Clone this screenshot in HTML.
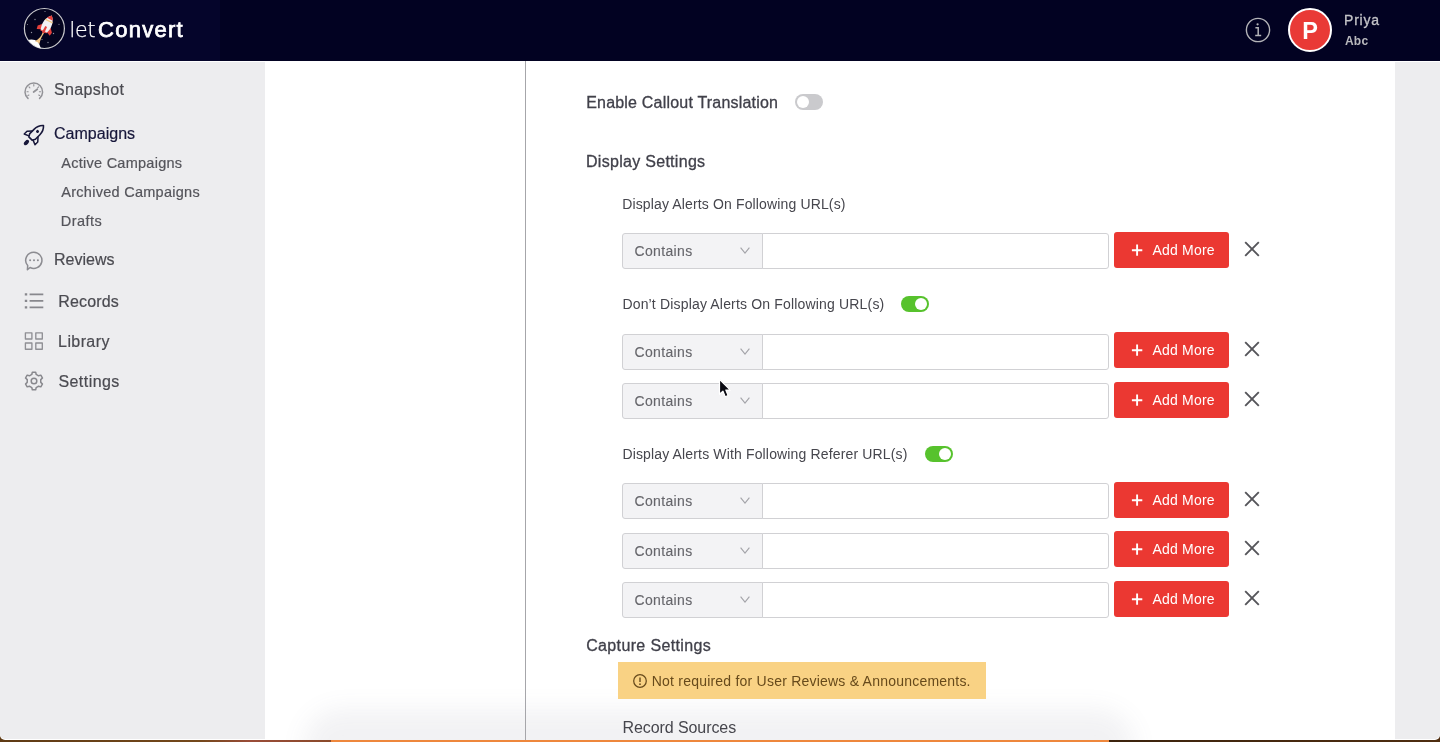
<!DOCTYPE html>
<html lang="en">
<head>
<meta charset="utf-8">
<title>letConvert - Campaign Settings</title>
<style>
*{box-sizing:border-box;margin:0;padding:0}
html,body{width:1440px;height:742px;overflow:hidden;background:#fff}
body{position:relative;will-change:transform;font-family:"Liberation Sans",Arial,sans-serif;color:#3f3f46;-webkit-font-smoothing:antialiased}
.abs,.t{position:absolute}
.t{white-space:nowrap;line-height:20px;font-size:16px}
svg{display:block;overflow:visible}

/* ---------- top bar ---------- */
.topbar{position:absolute;left:0;top:0;width:1440px;height:61px;background:#020222}
.topbar .logo-bg{position:absolute;left:0;top:0;width:220px;height:61px;background:#05052b}
.brand{left:69.500px;top:15px;font-size:22px;line-height:30px;color:#fff}
.brand i{font-style:normal;font-family:"DejaVu Sans","Liberation Sans",sans-serif;font-weight:200;font-size:20.500px;letter-spacing:-.2px;-webkit-text-stroke:.25px #fff}
.brand b{font-weight:400;letter-spacing:1.250px;margin-left:2.800px;-webkit-text-stroke:.75px #fff}
.user-name{left:1344px;top:10px;font-size:14px;color:#c4c4c8;letter-spacing:.8px;-webkit-text-stroke:.3px #c4c4c8}
.user-org{left:1345px;top:31px;font-size:12px;font-weight:700;color:#b9b9bd;letter-spacing:.2px}
.avatar{position:absolute;left:1288px;top:8px;width:44px;height:44px;border-radius:50%;background:#e93a36;border:2px solid #fff;color:#fff;font-weight:700;font-size:23.500px;line-height:42px;text-align:center}

/* ---------- sidebar ---------- */
.sidebar{position:absolute;left:0;top:62px;width:265px;height:677px;border-radius:0 0 0 5px;background:#ededef}
.gutter{position:absolute;left:1395px;top:62px;width:45px;height:677px;border-radius:0 0 5px 0;background:#ededef}
.nav{color:#4b4b51;-webkit-text-stroke:.2px #4b4b51}
.nav.on{color:#17173a;-webkit-text-stroke:.2px #17173a}
.sub{font-size:14.500px;color:#55555b;-webkit-text-stroke:.2px #55555b}
.ico{position:absolute}

/* ---------- content ---------- */
.content{position:absolute;left:265px;top:61px;width:1130px;height:679px;background:#fff;overflow:hidden}
.rule{position:absolute;left:525px;top:61px;width:1px;height:679px;background:#a6a6aa}
.h{font-size:16px;color:#40404a;-webkit-text-stroke:.3px #40404a}
.lbl{font-size:14px;color:#46464d}

.sel{position:absolute;left:622px;width:141px;height:36px;background:#f3f3f5;border:1px solid #d1d1d4;border-radius:3px 0 0 3px}
.sel span{position:absolute;left:11.500px;top:7px;font-size:14px;line-height:20px;color:#66666b;letter-spacing:.34px;-webkit-text-stroke:.12px #66666b}
.sel svg{position:absolute;left:117px;top:12.700px}
.inp{position:absolute;left:762px;width:347px;height:36px;background:#fff;border:1px solid #d1d1d4;border-radius:0 3px 3px 0}
.btn{position:absolute;left:1114px;width:115px;height:36px;background:#eb3832;border-radius:3px;color:#fff}
.btn span{position:absolute;left:38.500px;top:8px;font-size:14px;line-height:20px;letter-spacing:.2px}
.btn svg{position:absolute;left:17px;top:12px}
.x{position:absolute;left:1244px}

.tog{position:absolute;width:28px;height:16px;border-radius:8px;background:#cacacd}
.tog i{position:absolute;left:2px;top:2px;width:12px;height:12px;border-radius:50%;background:#fff}
.tog.on{background:#57c22d}
.tog.on i{left:14px}

.note{position:absolute;left:618px;top:662px;width:368px;height:36.500px;background:#f9d284}
.note span{position:absolute;left:33.700px;top:9px;font-size:14px;line-height:20px;color:#674a1b;letter-spacing:.22px}
.note svg{position:absolute;left:15px;top:12px}

.dock-shadow{position:absolute;left:65px;top:674px;width:778px;height:30px;border-radius:14px;background:rgba(110,110,125,.085);box-shadow:0 0 24px 26px rgba(110,110,125,.085)}
.desk{position:absolute;left:0;top:734px;width:1440px;height:8px;background:linear-gradient(to right,#5e3a14 0,#74481b 200px,#9a4c38 250px,#8a4a2a 331px,#ee873c 331px,#ee873c 1109px,#3c230d 1109px,#4e2d10 1440px)}
.win{position:absolute;left:0;top:0;width:1440px;height:740px;background:#fff;border-radius:0 0 5px 5px;overflow:hidden}
</style>
</head>
<body>
<div class="desk"></div>
<div class="win">

<header class="topbar">
  <div class="logo-bg"></div>
  <svg class="abs" style="left:23px;top:7px" width="43" height="43" viewBox="0 0 43 43">
    <defs><clipPath id="lc"><circle cx="21.4" cy="21.500" r="19.900"/></clipPath></defs>
    <circle cx="21.4" cy="21.500" r="20" fill="#04041f" stroke="#c9c9cc" stroke-width="1.200"/>
    <g clip-path="url(#lc)">
      <g fill="#8f8f9c"><circle cx="22" cy="4.500" r=".6"/><circle cx="12" cy="12.500" r=".7"/><circle cx="4.500" cy="17.500" r=".5"/><circle cx="36" cy="17.300" r=".6"/><circle cx="8.500" cy="25.500" r=".7"/><circle cx="30.500" cy="26.500" r=".7"/><circle cx="19" cy="32.500" r=".6"/><circle cx="25" cy="35.500" r=".7"/></g>
      <path d="M4 33.500 C8 31.500 12 32.500 14.500 34.500 C16.500 36.500 17 39 18.500 43 L3 43 Z" fill="#fff"/>
      <path d="M19.600 25.600 C18.300 29.500 16 32 12 34.300 C14 34.800 15.500 35.800 16.300 37.200 C17.200 33 18.800 29.500 21 26.300 Z" fill="#efc383"/>
      <g transform="translate(24.300 17.300) rotate(27)">
        <path d="M-4.300 1.500 L-8 5.500 L-7.300 9 L-3.300 7.300 Z" fill="#e5403b"/>
        <path d="M4.300 1.500 L8 5.500 L7.300 9 L3.300 7.300 Z" fill="#e5403b"/>
        <path d="M0 -9.800 C3 -7.200 4.700 -3.200 4.700 1 C4.700 4 4 6.800 3 8.600 L-3 8.600 C-4 6.800 -4.700 4 -4.700 1 C-4.700 -3.200 -3 -7.200 0 -9.800 Z" fill="#f1f1f3"/>
        <path d="M0 -9.800 C1.400 -8.600 2.500 -7.200 3.300 -5.600 L-3.300 -5.600 C-2.500 -7.200 -1.400 -8.600 0 -9.800 Z" fill="#e5403b"/>
        <path d="M-3.900 -4.300 L3.900 -4.300 L4.300 -3 L-4.300 -3 Z" fill="#f0c680"/>
        <path d="M-1 2.500 L1 2.500 L1.200 9.600 L-1.200 9.600 Z" fill="#e5403b"/>
        <path d="M-3.400 7.600 L3.400 7.600 L3 8.600 L-3 8.600 Z" fill="#e5403b"/>
      </g>
    </g>
  </svg>
  <div class="t brand"><i>let</i><b>Convert</b></div>

  <svg class="abs" style="left:1245px;top:17px" width="26" height="26" viewBox="0 0 26 26" fill="none" stroke="#b4b4b8" stroke-width="1.400">
    <circle cx="13" cy="13" r="11.6"/>
    <path d="M10.400 10.800 H13.200 V18.200 M10.200 18.500 H16.200" stroke-width="1.500"/>
    <circle cx="12.600" cy="7.300" r="1.150" fill="#b4b4b8" stroke="none"/>
  </svg>
  <div class="avatar">P</div>
  <div class="t user-name">Priya</div>
  <div class="t user-org">Abc</div>
</header>

<div class="sidebar"></div>
<div class="gutter"></div>

<nav>
<svg class="ico" style="left:24px;top:81px" width="20" height="20" viewBox="0 0 20 20" fill="none" stroke="#929297" stroke-width="1.500" stroke-linecap="round">
  <path d="M4 17.400 A8.800 8.800 0 1 1 15.600 17.400"/>
  <path d="M9.800 3.600 V4.900 M3 10.700 H4.200 M16.600 10.700 H15.400 M5 5.900 L5.900 6.800 M14.600 5.900 L13.700 6.800 M3.900 14.500 L4.900 14 M15.700 14.500 L14.700 14" stroke-width="1.100"/>
  <path d="M9.600 11 L13.300 8.200" stroke-width="1.700"/>
</svg>
<div class="t nav" style="left:54px;top:80px;letter-spacing:.35px">Snapshot</div>

<svg class="ico" style="left:23px;top:124px" width="22" height="22" viewBox="0 0 22 22" fill="none" stroke="#17173a" stroke-width="1.600" stroke-linejoin="round">
  <g transform="rotate(45 11 11)">
    <path d="M11 -2.400 C14 .2 15 3.600 15 7 V13 L13.300 16 H8.700 L7 13 V7 C7 3.600 8 .2 11 -2.400 Z"/>
    <path d="M7 9.300 L3.400 13.300 V17.200 L8 15.300 M15 9.300 L18.600 13.300 V17.200 L14 15.300" stroke-width="1.500"/>
    <circle cx="11" cy="6" r="1.500" fill="#17173a" stroke="none"/>
    <ellipse cx="11" cy="21.700" rx="1.900" ry="3.100" fill="#17173a" stroke="none"/>
  </g>
</svg>
<div class="t nav on" style="left:54px;top:124px;letter-spacing:.02px">Campaigns</div>

<div class="t sub" style="left:61.300px;top:153px;letter-spacing:.26px">Active Campaigns</div>
<div class="t sub" style="left:61.300px;top:182px;letter-spacing:.27px">Archived Campaigns</div>
<div class="t sub" style="left:60.800px;top:211px;letter-spacing:.44px">Drafts</div>

<svg class="ico" style="left:24px;top:251px" width="20" height="20" viewBox="0 0 20 20" fill="none" stroke="#8c8c91" stroke-width="1.500" stroke-linejoin="round">
  <path d="M9.900 1.200 A8.100 8.100 0 1 1 6.100 16.500 L3.400 18.700 L3.700 14.600 A8.100 8.100 0 0 1 9.900 1.200 Z"/>
  <circle cx="6.100" cy="9.300" r="1" fill="#8c8c91" stroke="none"/><circle cx="10" cy="9.300" r="1" fill="#8c8c91" stroke="none"/><circle cx="13.900" cy="9.300" r="1" fill="#8c8c91" stroke="none"/>
</svg>
<div class="t nav" style="left:54px;top:250px;letter-spacing:0px">Reviews</div>

<svg class="ico" style="left:24px;top:292px" width="20" height="18" viewBox="0 0 20 18" fill="none" stroke="#88888d" stroke-width="1.600">
  <path d="M5.600 2.400 H19.300 M5.600 8.900 H19.300 M5.600 15.400 H19.300"/>
  <path d="M.8 2.400 H3.200 M.8 8.900 H3.200 M.8 15.400 H3.200" stroke-width="2.200"/>
</svg>
<div class="t nav" style="left:58.300px;top:292px;letter-spacing:.15px">Records</div>

<svg class="ico" style="left:24px;top:332px" width="20" height="19" viewBox="0 0 20 19" fill="none" stroke="#8f8f94" stroke-width="1.350" stroke-linejoin="round">
  <rect x="1.400" y=".8" width="6.500" height="6.200"/><rect x="11.800" y=".8" width="6.500" height="6.200"/>
  <rect x="1.400" y="11" width="6.500" height="6.200"/><rect x="11.800" y="11" width="6.500" height="6.200"/>
</svg>
<div class="t nav" style="left:58.100px;top:332px;letter-spacing:.4px">Library</div>

<svg class="ico" style="left:24px;top:371px" width="20" height="20" viewBox="0 0 20 20" fill="none" stroke="#88888d" stroke-width="1.500" stroke-linejoin="round">
  <path d="M7.800 3.460 L8.340 1.150 L11.660 1.150 L12.200 3.460 L14.560 4.820 L16.830 4.140 L18.490 7.010 L16.760 8.640 L16.760 11.360 L18.490 12.990 L16.830 15.860 L14.560 15.180 L12.200 16.540 L11.660 18.850 L8.340 18.850 L7.800 16.540 L5.440 15.180 L3.170 15.860 L1.510 12.990 L3.240 11.360 L3.240 8.640 L1.510 7.010 L3.170 4.140 L5.440 4.820 Z"/>
  <circle cx="10" cy="10" r="2.800"/>
</svg>
<div class="t nav" style="left:58.400px;top:372px;letter-spacing:.45px">Settings</div>

</nav>

<div class="content"><div class="dock-shadow"></div></div>
<div class="rule"></div>

<main>

<div class="t h" style="left:586.200px;top:92.500px;letter-spacing:.2px">Enable Callout Translation</div>
<div class="tog" style="left:795px;top:94px"><i></i></div>

<div class="t h" style="left:586px;top:152px;letter-spacing:.29px">Display Settings</div>

<div class="t lbl" style="left:622.200px;top:194px;letter-spacing:.14px">Display Alerts On Following URL(s)</div>
<div class="sel" style="top:233px"><span>Contains</span><svg width="10" height="7" viewBox="0 0 10 7" fill="none" stroke="#a3a3a8" stroke-width="1.100"><path d="M.6 .6 L5 6.200 L9.400 .6"/></svg></div>
<div class="inp" style="top:233px"></div>
<div class="btn" style="top:232px"><svg width="12" height="12" viewBox="0 0 12 12" stroke="#fff" stroke-width="1.900"><path d="M6.100 .6 V11.800 M.9 6.200 H11.300"/></svg><span>Add More</span></div>
<svg class="x" style="top:241px" width="16" height="16" viewBox="0 0 16 16" stroke="#55555a" stroke-width="1.900"><path d="M1.200 1.200 L14.800 14.800 M14.800 1.200 L1.200 14.800"/></svg>

<div class="t lbl" style="left:622.400px;top:294px;letter-spacing:.17px">Don’t Display Alerts On Following URL(s)</div>
<div class="tog on" style="left:901px;top:296px"><i></i></div>
<div class="sel" style="top:334px"><span>Contains</span><svg width="10" height="7" viewBox="0 0 10 7" fill="none" stroke="#a3a3a8" stroke-width="1.100"><path d="M.6 .6 L5 6.200 L9.400 .6"/></svg></div>
<div class="inp" style="top:334px"></div>
<div class="btn" style="top:332px"><svg width="12" height="12" viewBox="0 0 12 12" stroke="#fff" stroke-width="1.900"><path d="M6.100 .6 V11.800 M.9 6.200 H11.300"/></svg><span>Add More</span></div>
<svg class="x" style="top:341px" width="16" height="16" viewBox="0 0 16 16" stroke="#55555a" stroke-width="1.900"><path d="M1.200 1.200 L14.800 14.800 M14.800 1.200 L1.200 14.800"/></svg>

<div class="sel" style="top:383px"><span>Contains</span><svg width="10" height="7" viewBox="0 0 10 7" fill="none" stroke="#a3a3a8" stroke-width="1.100"><path d="M.6 .6 L5 6.200 L9.400 .6"/></svg></div>
<div class="inp" style="top:383px"></div>
<div class="btn" style="top:382px"><svg width="12" height="12" viewBox="0 0 12 12" stroke="#fff" stroke-width="1.900"><path d="M6.100 .6 V11.800 M.9 6.200 H11.300"/></svg><span>Add More</span></div>
<svg class="x" style="top:391px" width="16" height="16" viewBox="0 0 16 16" stroke="#55555a" stroke-width="1.900"><path d="M1.200 1.200 L14.800 14.800 M14.800 1.200 L1.200 14.800"/></svg>

<div class="t lbl" style="left:622.400px;top:444px;letter-spacing:.15px">Display Alerts With Following Referer URL(s)</div>
<div class="tog on" style="left:925px;top:446px"><i></i></div>
<div class="sel" style="top:483px"><span>Contains</span><svg width="10" height="7" viewBox="0 0 10 7" fill="none" stroke="#a3a3a8" stroke-width="1.100"><path d="M.6 .6 L5 6.200 L9.400 .6"/></svg></div>
<div class="inp" style="top:483px"></div>
<div class="btn" style="top:482px"><svg width="12" height="12" viewBox="0 0 12 12" stroke="#fff" stroke-width="1.900"><path d="M6.100 .6 V11.800 M.9 6.200 H11.300"/></svg><span>Add More</span></div>
<svg class="x" style="top:491px" width="16" height="16" viewBox="0 0 16 16" stroke="#55555a" stroke-width="1.900"><path d="M1.200 1.200 L14.800 14.800 M14.800 1.200 L1.200 14.800"/></svg>

<div class="sel" style="top:533px"><span>Contains</span><svg width="10" height="7" viewBox="0 0 10 7" fill="none" stroke="#a3a3a8" stroke-width="1.100"><path d="M.6 .6 L5 6.200 L9.400 .6"/></svg></div>
<div class="inp" style="top:533px"></div>
<div class="btn" style="top:531px"><svg width="12" height="12" viewBox="0 0 12 12" stroke="#fff" stroke-width="1.900"><path d="M6.100 .6 V11.800 M.9 6.200 H11.300"/></svg><span>Add More</span></div>
<svg class="x" style="top:540px" width="16" height="16" viewBox="0 0 16 16" stroke="#55555a" stroke-width="1.900"><path d="M1.200 1.200 L14.800 14.800 M14.800 1.200 L1.200 14.800"/></svg>

<div class="sel" style="top:582px"><span>Contains</span><svg width="10" height="7" viewBox="0 0 10 7" fill="none" stroke="#a3a3a8" stroke-width="1.100"><path d="M.6 .6 L5 6.200 L9.400 .6"/></svg></div>
<div class="inp" style="top:582px"></div>
<div class="btn" style="top:581px"><svg width="12" height="12" viewBox="0 0 12 12" stroke="#fff" stroke-width="1.900"><path d="M6.100 .6 V11.800 M.9 6.200 H11.300"/></svg><span>Add More</span></div>
<svg class="x" style="top:590px" width="16" height="16" viewBox="0 0 16 16" stroke="#55555a" stroke-width="1.900"><path d="M1.200 1.200 L14.800 14.800 M14.800 1.200 L1.200 14.800"/></svg>

<div class="t h" style="left:586.200px;top:636px;letter-spacing:.36px">Capture Settings</div>
<div class="note"><svg width="14" height="14" viewBox="0 0 14 14" fill="none" stroke="#674a1b" stroke-width="1.250"><circle cx="7" cy="7" r="6.300"/><path d="M7 3.500 V8" stroke-width="1.400"/><circle cx="7" cy="10.200" r=".85" fill="#674a1b" stroke="none"/></svg><span>Not required for User Reviews &amp; Announcements.</span></div>

<div class="t" style="left:622.500px;top:718px;color:#46464d;letter-spacing:-.08px">Record Sources</div>

</main>

<!-- mouse pointer -->
<svg class="abs" style="left:718px;top:378px" width="14" height="21" viewBox="0 0 14 21"><path d="M1.500 1.300 V16.300 L4.900 13.100 L7.200 18.700 L10.100 17.500 L7.800 12.100 H12.300 Z" fill="#0a0a12" stroke="#fff" stroke-width="1.200" stroke-linejoin="round"/></svg>

</div>
</body>
</html>
